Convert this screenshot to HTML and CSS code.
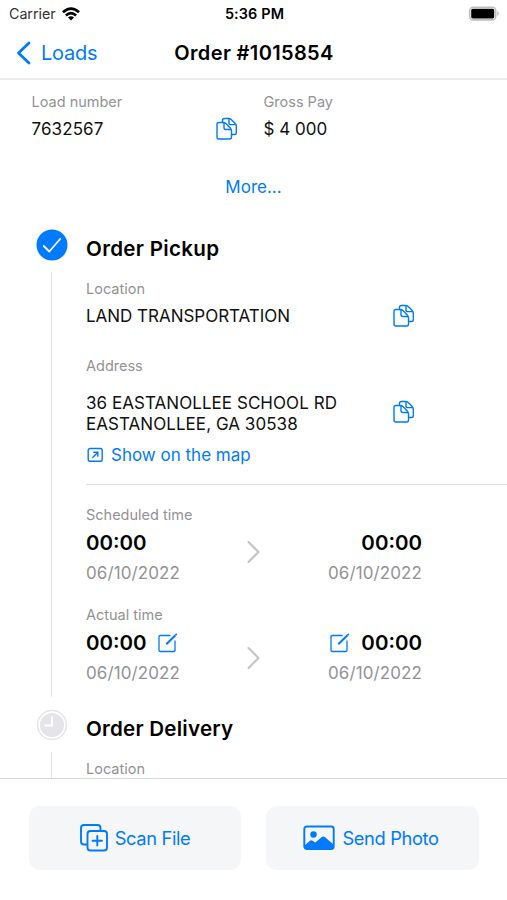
FILE: index.html
```html
<!DOCTYPE html>
<html lang="en">
<head>
<meta charset="utf-8">
<title>Order #1015854</title>
<link rel="stylesheet" href="styles.css">
</head>
<body>
<svg class="sprite" aria-hidden="true">
  <symbol id="copy" viewBox="0 0 24 24">
    <g fill="none" stroke="currentColor" stroke-width="1.4" stroke-linejoin="round">
      <path d="M7.500 5.500V3.400Q7.500 1.500 9.400 1.500H13.500Q15 1.500 16.200 2.600L20.200 6.500Q21.300 7.600 21.300 9.200V15.600Q21.300 17.500 19.400 17.500H16.600"/>
      <path d="M3.900 5.500H8.300Q9.800 5.500 10.900 6.600L15.400 11.200Q16.500 12.300 16.500 13.900V20.100Q16.500 22 14.600 22H3.900Q2 22 2 20.100V7.400Q2 5.500 3.900 5.500Z"/>
      <path d="M9 5.700V10.600Q9 12.500 10.900 12.500H16M14 1.700V5.700Q14 7.600 15.900 7.600H20.800"/>
    </g>
  </symbol>
  <symbol id="edit" viewBox="0 0 20 20">
    <g fill="none" stroke="currentColor">
      <path stroke-width="1.3" stroke-linejoin="round" d="M12.500 2.500H2.100Q1 2.500 1 3.600V17.400Q1 18.500 2.100 18.500H15.900Q17 18.500 17 17.400V7.400"/>
      <path stroke-width="2" d="M8.300 11.300L17.400 2.200"/>
      <path stroke-width="1.800" stroke-linecap="round" d="M18 1.700L18.300 1.400"/>
    </g>
  </symbol>
  <symbol id="next" viewBox="0 0 14 24">
    <path fill="none" stroke="currentColor" stroke-width="2" stroke-linecap="round" stroke-linejoin="round" d="M1.500 2L11.500 12L1.500 22"/>
  </symbol>
</svg>

<div class="screen">
  <div class="status">
    <div class="carrier">Carrier
      <svg class="wifi" viewBox="0 0 18 14"><g fill="none" stroke="currentColor" stroke-width="2.700"><path d="M1 5.200Q9-2 17 5.200"/><path d="M3.900 8.400Q9 3.800 14.100 8.400"/></g><path fill="currentColor" d="M6 10.500Q9 8 12 10.500L9 13.600Z"/></svg>
    </div>
    <div class="clock">5:36 PM</div>
    <svg class="battery" viewBox="0 0 32 16"><rect x="1.700" y="1.300" width="26" height="12.600" rx="3.500" fill="#fff" stroke="#bdbdbd" stroke-width="1.600"/><rect x="3.200" y="2.800" width="23" height="9.600" rx="1.600" fill="#000"/><path d="M29.200 5.300Q31 6.200 31 7.600T29.200 9.900Z" fill="#bdbdbd"/></svg>
  </div>

  <header class="nav">
    <a class="back"><svg class="back-icon" viewBox="0 0 16 24"><path fill="none" stroke="currentColor" stroke-width="2.800" stroke-linecap="round" stroke-linejoin="round" d="M14 2L3.500 12L14 22"/></svg><span>Loads</span></a>
    <h1>Order #1015854</h1>
    <span></span>
  </header>

  <main>
    <section class="summary">
      <div class="load">
        <div><div class="label">Load number</div><div class="value">7632567</div></div>
        <svg class="copy"><use href="#copy"/></svg>
      </div>
      <div><div class="label">Gross Pay</div><div class="value pay">$ 4 000</div></div>
    </section>
    <a class="more">More...</a>

    <section class="stop">
      <div class="rail">
        <svg class="mark" viewBox="0 0 32 32"><circle cx="16" cy="16" r="15.500" fill="#007aff"/><path d="M7.700 17L13.300 22.500L24.100 10" fill="none" stroke="#fff" stroke-width="1.800" stroke-linecap="round" stroke-linejoin="round"/></svg>
        <div class="line"></div>
      </div>
      <div class="details">
        <h2>Order Pickup</h2>
        <div class="label">Location</div>
        <div class="row location"><div class="value name">LAND TRANSPORTATION</div><svg class="copy"><use href="#copy"/></svg></div>
        <div class="label">Address</div>
        <div class="row address"><div class="value caps">36 EASTANOLLEE SCHOOL RD<br>EASTANOLLEE, GA 30538</div><svg class="copy"><use href="#copy"/></svg></div>
        <a class="map"><svg class="map-icon" viewBox="0 0 18 16"><rect x="2.200" y="1.500" width="14" height="12.800" rx="1.800" fill="none" stroke="currentColor" stroke-width="1.400"/><path d="M6.400 10.800L11.400 5.700M7.300 5.300H11.800V9.700" fill="none" stroke="currentColor" stroke-width="1.400"/></svg>Show on the map</a>
        <hr>
        <div class="label">Scheduled time</div>
        <div class="times scheduled">
          <div><div class="time">00:00</div><div class="date">06/10/2022</div></div>
          <svg class="next"><use href="#next"/></svg>
          <div class="end"><div class="time">00:00</div><div class="date">06/10/2022</div></div>
        </div>
        <div class="label">Actual time</div>
        <div class="times actual">
          <div><div class="time">00:00<svg class="edit"><use href="#edit"/></svg></div><div class="date">06/10/2022</div></div>
          <svg class="next"><use href="#next"/></svg>
          <div class="end"><div class="time"><svg class="edit"><use href="#edit"/></svg>00:00</div><div class="date">06/10/2022</div></div>
        </div>
      </div>
    </section>

    <section class="stop upcoming">
      <div class="rail">
        <svg class="mark" viewBox="0 0 32 32"><circle cx="16" cy="16" r="14.400" fill="#fff" stroke="#e5e5e9" stroke-width="1.500"/><circle cx="16" cy="16" r="12" fill="#e5e5e9"/><path d="M16 7.500V16.500H8.500" fill="none" stroke="#fff" stroke-width="1.800"/></svg>
        <div class="line"></div>
      </div>
      <div class="details"><h2 class="delivery">Order Delivery</h2><div class="label">Location</div></div>
    </section>
  </main>

  <footer>
    <button class="scan"><svg class="scan-icon" viewBox="0 0 30 30"><g fill="none" stroke="currentColor" stroke-width="1.900" stroke-linecap="round"><path d="M8 21.500H5Q2 21.500 2 18.500V5Q2 2 5 2H18.500Q21.500 2 21.500 5V8"/><rect x="8.500" y="8" width="19.500" height="19.500" rx="3"/><path d="M18.300 13V22.500M13.500 17.800H23"/></g></svg>Scan File</button>
    <button class="send"><svg class="photo-icon" viewBox="0 0 32 26"><rect x="1.300" y="1.500" width="29.400" height="22.600" rx="2.500" fill="none" stroke="currentColor" stroke-width="1.900"/><circle cx="10.500" cy="9.500" r="3.200" fill="currentColor"/><path fill="currentColor" d="M1.500 20.500L7 15.700Q8.300 14.600 9.600 15.700L12.300 17.600L18.500 12.300Q20.300 10.900 22.100 12.300L30.500 19.500V22Q30.500 24 28.500 24H3.500Q1.500 24 1.500 22Z"/></svg>Send Photo</button>
  </footer>
</div>
</body>
</html>
```
FILE: styles.css
```css
* { box-sizing: border-box; }
body {
  margin: 0;
  background: #fff;
  color: #111;
  font-family: Inter, "Liberation Sans", sans-serif;
}
svg { display: block; flex: none; }
.sprite { display: none; }

.screen {
  height: 900px;
  display: flex;
  flex-direction: column;
  overflow: hidden;
}

.status {
  height: 27px;
  display: grid;
  grid-template-columns: 1fr auto 1fr;
  align-items: center;
  padding: 0 7px 0 9px;
  color: #000;
}
.carrier {
  display: flex;
  align-items: center;
  gap: 6px;
  font-size: 14.3px;
  letter-spacing: -0.05px;
  color: #333;
}
.wifi { width: 18px; height: 14px; color: #000; }
.clock { font-size: 14.4px; font-weight: 600; letter-spacing: 0.15px; }
.battery { width: 32px; height: 16px; justify-self: end; }

.nav {
  height: 53px;
  flex: none;
  display: grid;
  grid-template-columns: 1fr auto 1fr;
  align-items: center;
  padding: 0 14px 0 15px;
  border-bottom: 2px solid #ececec;
}
.back { display: flex; align-items: center; gap: 10px; font-size: 20px; letter-spacing: -0.25px; color: #007aff; }
.back-icon { width: 16px; height: 24px; }
h1 { margin: 0; font-size: 20px; font-weight: 600; letter-spacing: 0.36px; color: #000; }

main { flex: 1; min-height: 0; overflow: hidden; }
.label { font-size: 14.5px; line-height: 20px; color: #929295; }
.value { font-size: 17px; line-height: 20.400px; letter-spacing: 0.1px; }
.name { letter-spacing: -0.02px; }
.caps { letter-spacing: 0.05px; }
.copy { width: 24px; height: 24px; color: #007aff; }

.summary {
  display: grid;
  grid-template-columns: 232px 1fr;
  padding: 12px 0 0 31.500px;
}
.summary .value { margin-top: 7px; }
.load { display: flex; justify-content: space-between; align-items: flex-end; padding-right: 25px; }
.load .copy { margin-bottom: -2px; }
.pay { letter-spacing: 0; }
.more {
  display: block;
  width: fit-content;
  margin: 38px auto 0;
  font-size: 17px;
  line-height: 20px;
  color: #007aff;
}

.stop { display: grid; grid-template-columns: 50px 1fr; padding-left: 36px; }
.more + .stop { margin-top: 32px; height: 480px; }
.rail { display: flex; flex-direction: column; align-items: center; width: 31px; }
.mark { width: 32px; height: 32px; }
.line { width: 1px; flex: 1; margin: 11px 0 12px; background: #e4e4e6; }
.upcoming .line { margin-bottom: 0; }
.upcoming { height: 80px; }
h2 {
  margin: 8px 0 18px;
  font-size: 20.600px;
  line-height: 24px;
  font-weight: 600;
  letter-spacing: 0.3px;
  color: #000;
}
.delivery { letter-spacing: 0.22px; }
.row { display: flex; justify-content: space-between; align-items: center; width: 330px; }
.location { margin: 5px 0 28px; }
.address { margin: 17px 0 11px; }
.address .copy { margin-top: -3px; }
.map { display: flex; align-items: center; gap: 7px; font-size: 17px; line-height: 20px; color: #007aff; }
.map-icon { width: 18px; height: 16px; }
hr { margin: 19px 0 20px; border: 0; height: 1px; background: #dedee0; }
.times { display: grid; grid-template-columns: 1fr 14px 1fr; width: 336px; }
.time { display: flex; align-items: center; gap: 11px; font-size: 20.500px; line-height: 24px; font-weight: 600; color: #000; }
.date { margin-top: 8px; font-size: 17px; line-height: 20px; letter-spacing: 0.1px; color: #929295; }
.end .time { justify-content: flex-end; }
.end .date { text-align: right; }
.scheduled { margin: 6px 0 22px; }
.actual { margin-top: 6px; }
.next { width: 14px; height: 24px; margin-top: 9px; color: #c2c2c4; }
.actual .next { margin-top: 15px; }
.edit { width: 20px; height: 20px; color: #007aff; }

footer {
  height: 122px;
  flex: none;
  display: grid;
  grid-template-columns: 212px 213px;
  gap: 25px;
  align-items: start;
  padding: 27px 0 0 29px;
  border-top: 1px solid #d6d6d8;
}
button {
  height: 64px;
  display: flex;
  align-items: center;
  justify-content: center;
  gap: 7px;
  border: 0;
  border-radius: 11px;
  background: #f4f6f8;
  color: #007aff;
  font-family: inherit;
  font-size: 18.300px;
  letter-spacing: -0.35px;
}
.scan { padding: 0 6px 0 5px; gap: 6px; }
.send { padding: 0 8px 0 5px; }
.scan-icon { width: 30px; height: 30px; }
.photo-icon { width: 32px; height: 26px; }
```
